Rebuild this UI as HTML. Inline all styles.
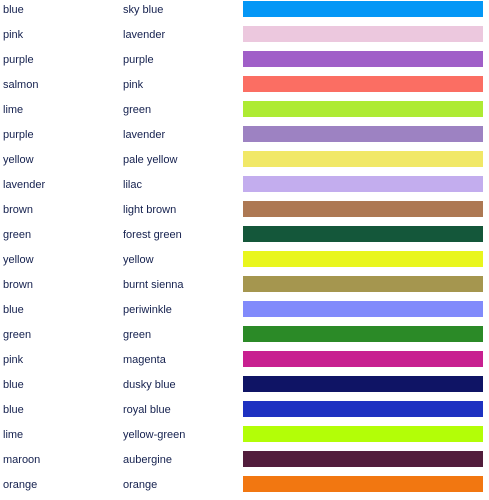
<!DOCTYPE html>
<html><head><style>
body{margin:0;width:489px;height:497px;background:#fff;position:relative;overflow:hidden;font-family:"Liberation Sans",sans-serif;font-size:11px;color:#14204e}
.r{position:absolute;left:0;width:489px;height:25px}
.a{position:absolute;left:3px;top:3px;line-height:14px}
.b{position:absolute;left:123px;top:3px;line-height:14px}
.c{position:absolute;left:243px;top:1px;width:240px;height:16px}
</style></head><body>
<div class="r" style="top:0"><span class="a">blue</span><span class="b">sky blue</span><div class="c" style="background:#0497f6"></div></div>
<div class="r" style="top:25px"><span class="a">pink</span><span class="b">lavender</span><div class="c" style="background:#ecc8de"></div></div>
<div class="r" style="top:50px"><span class="a">purple</span><span class="b">purple</span><div class="c" style="background:#a05fc8"></div></div>
<div class="r" style="top:75px"><span class="a">salmon</span><span class="b">pink</span><div class="c" style="background:#fb6e63"></div></div>
<div class="r" style="top:100px"><span class="a">lime</span><span class="b">green</span><div class="c" style="background:#aeeb33"></div></div>
<div class="r" style="top:125px"><span class="a">purple</span><span class="b">lavender</span><div class="c" style="background:#9d82c2"></div></div>
<div class="r" style="top:150px"><span class="a">yellow</span><span class="b">pale yellow</span><div class="c" style="background:#f1e867"></div></div>
<div class="r" style="top:175px"><span class="a">lavender</span><span class="b">lilac</span><div class="c" style="background:#c3adee"></div></div>
<div class="r" style="top:200px"><span class="a">brown</span><span class="b">light brown</span><div class="c" style="background:#ad7853"></div></div>
<div class="r" style="top:225px"><span class="a">green</span><span class="b">forest green</span><div class="c" style="background:#14573a"></div></div>
<div class="r" style="top:250px"><span class="a">yellow</span><span class="b">yellow</span><div class="c" style="background:#e9f61d"></div></div>
<div class="r" style="top:275px"><span class="a">brown</span><span class="b">burnt sienna</span><div class="c" style="background:#a5964f"></div></div>
<div class="r" style="top:300px"><span class="a">blue</span><span class="b">periwinkle</span><div class="c" style="background:#818afb"></div></div>
<div class="r" style="top:325px"><span class="a">green</span><span class="b">green</span><div class="c" style="background:#2b8a27"></div></div>
<div class="r" style="top:350px"><span class="a">pink</span><span class="b">magenta</span><div class="c" style="background:#c82090"></div></div>
<div class="r" style="top:375px"><span class="a">blue</span><span class="b">dusky blue</span><div class="c" style="background:#0f1465"></div></div>
<div class="r" style="top:400px"><span class="a">blue</span><span class="b">royal blue</span><div class="c" style="background:#1e31c1"></div></div>
<div class="r" style="top:425px"><span class="a">lime</span><span class="b">yellow-green</span><div class="c" style="background:#b3fe07"></div></div>
<div class="r" style="top:450px"><span class="a">maroon</span><span class="b">aubergine</span><div class="c" style="background:#521d3c"></div></div>
<div class="r" style="top:475px"><span class="a">orange</span><span class="b">orange</span><div class="c" style="background:#f27711"></div></div>
</body></html>
